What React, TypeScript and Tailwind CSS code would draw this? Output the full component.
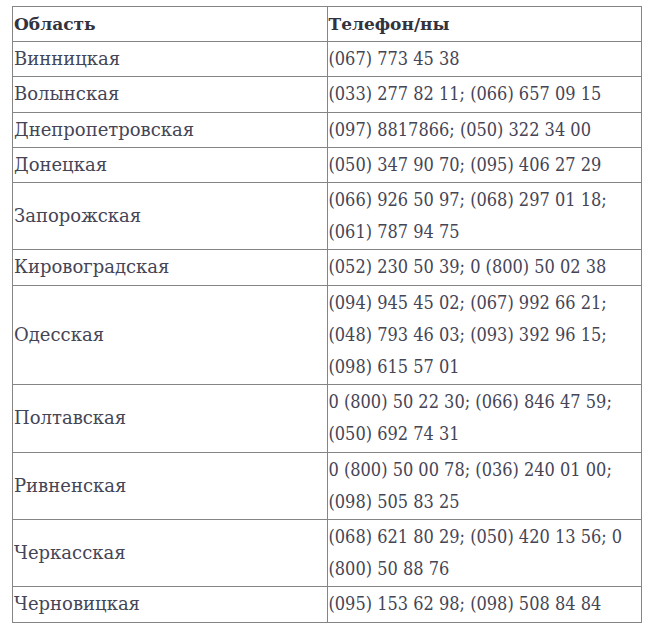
import React from 'react';

const rows: [string, string][] = [
  ['Винницкая', '(067) 773 45 38'],
  ['Волынская', '(033) 277 82 11; (066) 657 09 15'],
  ['Днепропетровская', '(097) 8817866; (050) 322 34 00'],
  ['Донецкая', '(050) 347 90 70; (095) 406 27 29'],
  ['Запорожская', '(066) 926 50 97; (068) 297 01 18; (061) 787 94 75'],
  ['Кировоградская', '(052) 230 50 39; 0 (800) 50 02 38'],
  ['Одесская', '(094) 945 45 02; (067) 992 66 21; (048) 793 46 03; (093) 392 96 15; (098) 615 57 01'],
  ['Полтавская', '0 (800) 50 22 30; (066) 846 47 59; (050) 692 74 31'],
  ['Ривненская', '0 (800) 50 00 78; (036) 240 01 00; (098) 505 83 25'],
  ['Черкасская', '(068) 621 80 29; (050) 420 13 56; 0 (800) 50 88 76'],
  ['Черновицкая', '(095) 153 62 98; (098) 508 84 84'],
];

const App: React.FC = () => {
  return (
    <div className="w-[654px] h-[630px] bg-white pt-[6px] pl-[12px] font-['DejaVu_Serif',serif] text-[18px] leading-[32.2px] text-[#454556]">
      <table className="w-[630px] border-collapse table-fixed">
        <thead>
          <tr>
            <th className="w-1/2 border border-[#858585] px-[1px] py-[1px] text-left text-[17px] font-bold text-[#333340]">Область</th>
            <th className="w-1/2 border border-[#858585] px-[1px] py-[1px] text-left text-[17px] font-bold text-[#333340]">Телефон/ны</th>
          </tr>
        </thead>
        <tbody>
          {rows.map(([region, phones]) => (
            <tr key={region}>
              <td className="border border-[#858585] px-[1px] py-[1px] align-middle">{region}</td>
              <td className="border border-[#858585] px-[1px] py-[1px] align-middle font-['DejaVu_Serif_Condensed','DejaVu_Serif',serif] [font-stretch:condensed]">
                {phones}
              </td>
            </tr>
          ))}
        </tbody>
      </table>
    </div>
  );
};

export default App;
